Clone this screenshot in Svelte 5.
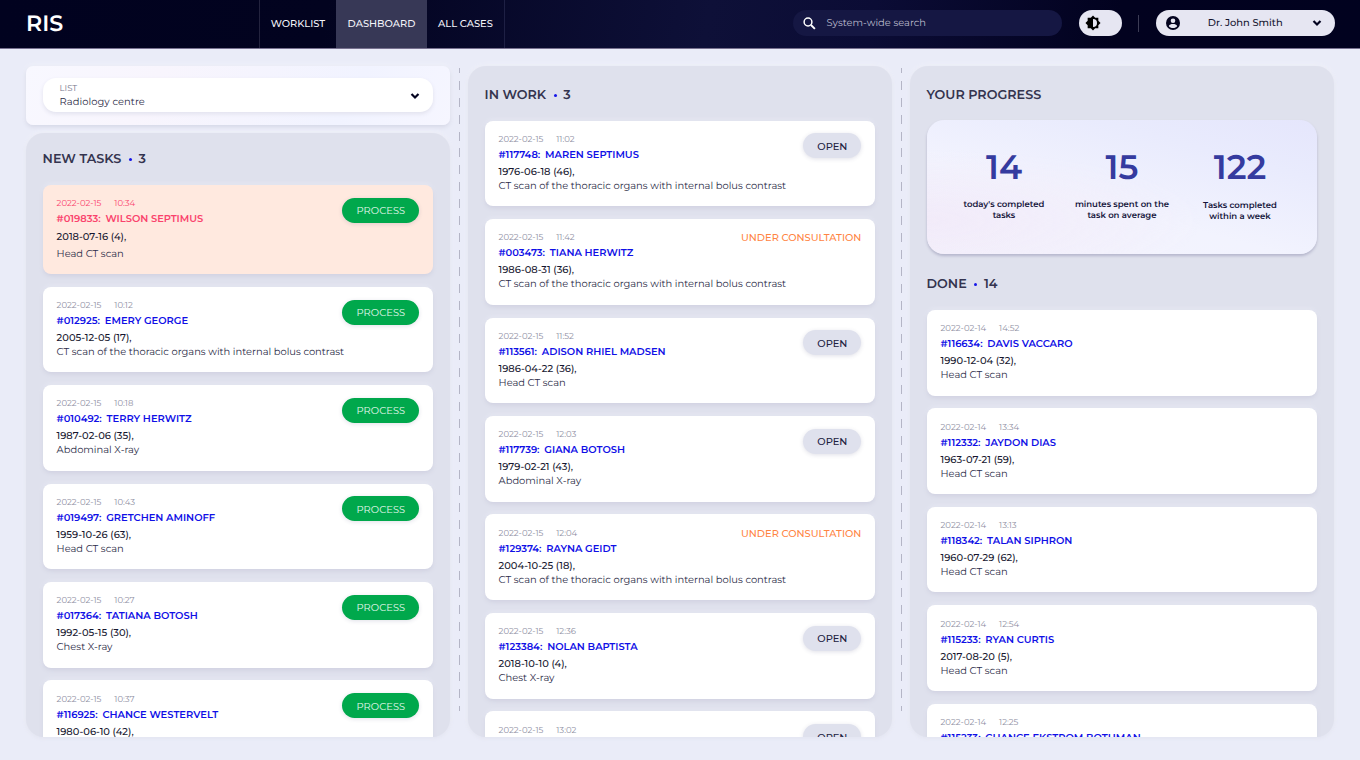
<script>
    // Worklist data for the three columns
    const newTasks = [
        { date: '2022-02-15', time: '10:34', id: '019833', name: 'WILSON SEPTIMUS', born: '2018-07-16 (4),', study: 'Head CT scan', urgent: true },
        { date: '2022-02-15', time: '10:12', id: '012925', name: 'EMERY GEORGE', born: '2005-12-05 (17),', study: 'CT scan of the thoracic organs with internal bolus contrast' },
        { date: '2022-02-15', time: '10:18', id: '010492', name: 'TERRY HERWITZ', born: '1987-02-06 (35),', study: 'Abdominal X-ray' },
        { date: '2022-02-15', time: '10:43', id: '019497', name: 'GRETCHEN AMINOFF', born: '1959-10-26 (63),', study: 'Head CT scan' },
        { date: '2022-02-15', time: '10:27', id: '017364', name: 'TATIANA BOTOSH', born: '1992-05-15 (30),', study: 'Chest X-ray' },
        { date: '2022-02-15', time: '10:37', id: '116925', name: 'CHANCE WESTERVELT', born: '1980-06-10 (42),', study: '' },
    ].map((task) => ({ ...task, action: 'process' }));

    const inWork = [
        { date: '2022-02-15', time: '11:02', id: '117748', name: 'MAREN SEPTIMUS', born: '1976-06-18 (46),', study: 'CT scan of the thoracic organs with internal bolus contrast', action: 'open' },
        { date: '2022-02-15', time: '11:42', id: '003473', name: 'TIANA HERWITZ', born: '1986-08-31 (36),', study: 'CT scan of the thoracic organs with internal bolus contrast', action: 'consult' },
        { date: '2022-02-15', time: '11:52', id: '113561', name: 'ADISON RHIEL MADSEN', born: '1986-04-22 (36),', study: 'Head CT scan', action: 'open' },
        { date: '2022-02-15', time: '12:03', id: '117739', name: 'GIANA BOTOSH', born: '1979-02-21 (43),', study: 'Abdominal X-ray', action: 'open' },
        { date: '2022-02-15', time: '12:04', id: '129374', name: 'RAYNA GEIDT', born: '2004-10-25 (18),', study: 'CT scan of the thoracic organs with internal bolus contrast', action: 'consult' },
        { date: '2022-02-15', time: '12:36', id: '123384', name: 'NOLAN BAPTISTA', born: '2018-10-10 (4),', study: 'Chest X-ray', action: 'open' },
        { date: '2022-02-15', time: '13:02', id: '', name: '', born: '', study: '', action: 'open' },
    ];

    const done = [
        { date: '2022-02-14', time: '14:52', id: '116634', name: 'DAVIS VACCARO', born: '1990-12-04 (32),', study: 'Head CT scan' },
        { date: '2022-02-14', time: '13:34', id: '112332', name: 'JAYDON DIAS', born: '1963-07-21 (59),', study: 'Head CT scan' },
        { date: '2022-02-14', time: '13:13', id: '118342', name: 'TALAN SIPHRON', born: '1960-07-29 (62),', study: 'Head CT scan' },
        { date: '2022-02-14', time: '12:54', id: '115233', name: 'RYAN CURTIS', born: '2017-08-20 (5),', study: 'Head CT scan' },
        { date: '2022-02-14', time: '12:25', id: '115233', name: 'CHANCE EKSTROM BOTHMAN', born: '', study: '' },
    ];

    const stats = [
        { value: 14, lines: ["today's completed", 'tasks'] },
        { value: 15, lines: ['minutes spent on the', 'task on average'] },
        { value: 122, lines: ['Tasks completed', 'within a week'] },
    ];

    const labels = { process: 'PROCESS', open: 'OPEN', consult: 'UNDER CONSULTATION' };
</script>

{#snippet chevron()}
    <svg class="chevron" viewBox="0 0 10 8">
        <path d="M1.5 2l3.5 3.5L8.5 2" fill="none" stroke="#03031f" stroke-width="2.2" />
    </svg>
{/snippet}

{#snippet heading(title, count)}
    <h2>{title}{#if count}<i></i>{count}{/if}</h2>
{/snippet}

{#snippet cards(list)}
    {#each list as task}
        <article class:urgent={task.urgent}>
            <div class="info">
                <p class="date"><span>{task.date}</span><span>{task.time}</span></p>
                <p class="name">
                    {#if task.id}<span>#{task.id}:</span><span>{task.name}</span>{/if}
                </p>
                <p class="born">{task.born}</p>
                <p class="study">{task.study}</p>
            </div>
            {#if task.action === 'consult'}
                <span class="consult">{labels.consult}</span>
            {:else if task.action}
                <button class={task.action}>{labels[task.action]}</button>
            {/if}
        </article>
    {/each}
{/snippet}

<div class="page">
    <header>
        <div class="logo">RIS</div>
        <nav>
            <a href="#worklist" class="worklist">WORKLIST</a>
            <a href="#dashboard" class="dashboard">DASHBOARD</a>
            <a href="#cases" class="cases">ALL CASES</a>
        </nav>
        <div class="search">
            <svg viewBox="0 0 14 14">
                <circle cx="5.4" cy="5.4" r="4.2" fill="none" stroke="#fff" stroke-width="1.6" />
                <path d="M8.6 8.6l4.2 4.2" stroke="#fff" stroke-width="2" />
            </svg>
            <span>System-wide search</span>
        </div>
        <button class="theme" aria-label="Theme">
            <svg viewBox="0 0 24 24">
                <path d="M20 8.69V4h-4.69L12 .69 8.69 4H4v4.69L.69 12 4 15.31V20h4.69L12 23.31 15.31 20H20v-4.69L23.31 12 20 8.69z" />
                <path d="M12 6a6 6 0 0 1 0 12z" fill="#e6e6f2" />
            </svg>
        </button>
        <div class="separator"></div>
        <div class="user">
            <svg viewBox="0 0 14 14">
                <circle cx="7" cy="7" r="7" fill="#03031f" />
                <circle cx="7" cy="4.7" r="2.3" fill="#e6e6f2" />
                <path d="M2.8 9.9C3.6 8.6 5 8.1 7 8.1s3.4.5 4.2 1.8C10.3 11.3 8.9 12 7 12s-3.3-.7-4.2-2.1z" fill="#e6e6f2" />
            </svg>
            <span>Dr. John Smith</span>
            {@render chevron()}
        </div>
    </header>

    <main>
        <div class="left">
            <section class="filter">
                <div class="select">
                    <div>
                        <small>LIST</small>
                        <span>Radiology centre</span>
                    </div>
                    {@render chevron()}
                </div>
            </section>
            <section class="column tasks">
                {@render heading('NEW TASKS', 3)}
                {@render cards(newTasks)}
            </section>
        </div>
        <div class="divider"></div>
        <section class="column">
            {@render heading('IN WORK', 3)}
            {@render cards(inWork)}
        </section>
        <div class="divider"></div>
        <section class="column">
            {@render heading('YOUR PROGRESS')}
            <div class="progress">
                {#each stats as stat}
                    <div class="stat">
                        <strong>{stat.value}</strong>
                        {#each stat.lines as line}<span>{line}</span>{/each}
                    </div>
                {/each}
            </div>
            {@render heading('DONE', 14)}
            {@render cards(done)}
        </section>
    </main>
</div>

<style>
    * {
        box-sizing: border-box;
    }

    .page {
        height: 760px;
        overflow: hidden;
        background: #eaecf8;
        color: #2c2c48;
        font-family: Montserrat, Inter, sans-serif;
        font-size: 9.92px;
        text-rendering: geometricPrecision;
    }

    h2,
    p {
        margin: 0;
    }

    button {
        border: 0;
        padding: 0;
        font: inherit;
    }

    /* Top bar */
    header {
        display: flex;
        align-items: center;
        height: 49px;
        padding: 0 25.5px 2px 26px;
        border-bottom: 1px solid #77718f;
        background: linear-gradient(100deg, #01021f 0%, #02031f 24%, #0e1038 52%, #0b0c35 64%, #02021f 82%, #01021f 100%);
        color: #fff;
    }

    .logo {
        width: 233px;
        font-size: 22.2px;
        font-weight: 600;
    }

    nav {
        display: flex;
        align-self: stretch;
        margin-bottom: -2px;
        border-left: 1px solid #23233e;
        border-right: 1px solid #1e2044;
    }

    nav a {
        display: flex;
        align-items: center;
        justify-content: center;
        padding-bottom: 1px;
        color: #f4f4fa;
        font-weight: 500;
        text-decoration: none;
    }

    .worklist {
        width: 76px;
    }

    .dashboard {
        width: 91px;
        background: #373856;
    }

    .cases {
        width: 77px;
    }

    .search {
        display: flex;
        align-items: center;
        gap: 10.5px;
        width: 269px;
        height: 26px;
        margin-left: 288px;
        padding-left: 10px;
        border-radius: 13px;
        background: #151743;
        color: #bcbccd;
    }

    .search svg {
        width: 13px;
    }

    .theme {
        display: flex;
        align-items: center;
        width: 43px;
        height: 26px;
        margin-left: 17px;
        padding-left: 6px;
        border-radius: 13px;
        background: #e6e6f2;
    }

    .theme svg {
        width: 16px;
    }

    .separator {
        width: 1px;
        height: 17px;
        margin: 0 17px 0 16px;
        background: #3c3c55;
    }

    .user {
        display: flex;
        flex: 1;
        align-items: center;
        justify-content: space-between;
        height: 26px;
        padding: 0 12px 0 10px;
        border-radius: 13px;
        background: #e6e6f2;
        color: #15152f;
        font-weight: 500;
    }

    .user span {
        margin-right: 2px;
    }

    .user svg:first-child {
        width: 14px;
    }

    .chevron {
        width: 10px;
    }

    /* Columns */
    main {
        display: grid;
        grid-template-columns: 424.8px 1px 424.8px 1px 424.8px;
        justify-content: space-between;
        height: 688px;
        padding: 16.6px 25.6px 0;
    }

    .left {
        display: flex;
        flex-direction: column;
        gap: 8.5px;
        height: 671.4px;
    }

    .filter {
        height: 59.3px;
        padding: 12.6px 17px;
        border-radius: 7px;
        background: linear-gradient(120deg, #f8f8ff, #f8f5fd 30%, #f1f3ff 75%, #f6f6ff);
        box-shadow: 0 2px 4px #d5d7e6, 0 -1px 4px #f3f4fb;
    }

    .select {
        display: flex;
        align-items: center;
        justify-content: space-between;
        height: 34px;
        padding: 0 13px 0 17px;
        border-radius: 13px;
        background: #fff;
        box-shadow: 0 2px 4px #e2e2ee;
    }

    .select small,
    .select span {
        display: block;
        line-height: 14px;
    }

    .select span {
        letter-spacing: 0.07px;
        line-height: 13px;
    }

    .select small {
        color: #75758c;
        font-size: 8.5px;
        line-height: 13px;
    }

    .select div {
        padding-top: 1px;
    }

    .select .chevron {
        margin-top: 1px;
    }

    .column {
        height: 671.4px;
        padding: 0 17px;
        overflow: hidden;
        border-radius: 18px;
        background: #dfe1ed;
        box-shadow: 0 1px 4px #e0e2ee, 0 -1px 4px #f3f4fb;
    }

    .tasks {
        flex: 1;
        height: auto;
        min-height: 0;
    }

    .divider {
        width: 1px;
        height: 643px;
        margin: 2px 0 0 0.4px;
        background: repeating-linear-gradient(#b4b5c6 0 9px, transparent 9px 16.9px);
        background-position: 0 -4px;
    }

    h2 {
        display: flex;
        align-items: center;
        height: 55px;
        padding-top: 4.6px;
        color: #34344f;
        font-size: 12.75px;
        font-weight: 600;
    }

    .progress + h2 {
        height: 55.6px;
        padding-top: 4px;
    }

    .tasks h2 {
        height: 51.3px;
        padding: 0;
    }

    h2 i {
        width: 3px;
        height: 3px;
        margin: 0 6.6px 0 7.6px;
        border-radius: 50%;
        background: #1616e8;
    }

    /* Cards */
    article {
        display: flex;
        justify-content: space-between;
        height: 85.7px;
        margin-bottom: 12.77px;
        padding: 12.4px 14px 0;
        border-radius: 8px;
        background: #fff;
        box-shadow: 0 2px 4px #cfd0e0, 0 -1px 4px #e9ebf5;
    }

    .info {
        flex: 1;
        width: 0;
        white-space: nowrap;
    }

    .date {
        display: flex;
        gap: 13px;
        color: #8e8ea2;
        font-size: 8.5px;
        line-height: 14px;
    }

    .name {
        display: flex;
        gap: 4.8px;
        height: 17px;
        color: #0f0fe6;
        font-weight: 600;
        line-height: 17px;
    }

    .born {
        color: #17172f;
        font-weight: 500;
        line-height: 16px;
    }

    .study {
        line-height: 13.5px;
    }

    .urgent {
        height: 89.2px;
        background: #ffe9df;
    }

    .urgent .date,
    .urgent .name {
        color: #fa426c;
    }

    .urgent .born {
        line-height: 19px;
    }

    .urgent .study {
        line-height: 15px;
    }

    article button {
        flex: none;
        height: 25px;
        margin-top: 0.5px;
        border-radius: 13px;
        box-shadow: 0 1px 4px rgba(50, 50, 100, 0.15);
    }

    .process {
        width: 77px;
        background: #00a84c;
        color: #e5f8ed;
        letter-spacing: 0.05px;
    }

    .open {
        width: 58px;
        background: #dfe1ed;
        color: #20203e;
        font-weight: 500;
    }

    .consult {
        margin-top: 1px;
        color: #ff8442;
        font-weight: 500;
        line-height: 13px;
        white-space: nowrap;
    }

    .progress {
        display: grid;
        grid-template-columns: repeat(3, 118px);
        justify-content: center;
        height: 134.5px;
        margin-top: -0.8px;
        padding: 26px 0 0;
        border-radius: 17px;
        background:
            radial-gradient(ellipse at 0% 75%, #f2ebf9, transparent 50%),
            linear-gradient(195deg, #e5e6fc 0%, #e9ebfd 25%, #f2f3fe 60%, #f4f3fd 100%);
        box-shadow: 0 2px 3px #b5b6cc;
    }

    .stat {
        display: flex;
        flex-direction: column;
        align-items: center;
        color: #15153b;
        font-size: 8.5px;
        font-weight: 600;
        line-height: 11px;
    }

    .stat strong {
        margin-bottom: 11.5px;
        color: #353b9f;
        font-size: 34px;
        font-weight: 600;
        line-height: 43px;
    }

    .stat:last-child strong {
        margin-bottom: 12.5px;
    }
</style>
